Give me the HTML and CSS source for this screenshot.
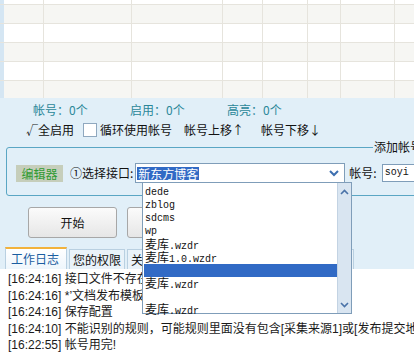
FILE: index.html
```html
<!DOCTYPE html>
<html>
<head>
	<meta charset="utf-8">
	<title>帐号管理</title>
	<link rel="stylesheet" href="styles.css">
</head>
<body>
	<div class="grid">
		<div class="row r0"><span class="c0"></span><span class="c1"></span><span class="c2"></span><span class="c3"></span><span class="c4"></span><span class="c5"></span><span class="c6"></span><span class="c7"></span><span class="c8"></span></div>
		<div class="row odd"><span class="c0"></span><span class="c1"></span><span class="c2"></span><span class="c3"></span><span class="c4"></span><span class="c5"></span><span class="c6"></span><span class="c7"></span><span class="c8"></span></div>
		<div class="row"><span class="c0"></span><span class="c1"></span><span class="c2"></span><span class="c3"></span><span class="c4"></span><span class="c5"></span><span class="c6"></span><span class="c7"></span><span class="c8"></span></div>
		<div class="row odd"><span class="c0"></span><span class="c1"></span><span class="c2"></span><span class="c3"></span><span class="c4"></span><span class="c5"></span><span class="c6"></span><span class="c7"></span><span class="c8"></span></div>
		<div class="row"><span class="c0"></span><span class="c1"></span><span class="c2"></span><span class="c3"></span><span class="c4"></span><span class="c5"></span><span class="c6"></span><span class="c7"></span><span class="c8"></span></div>
		<div class="row odd last"><span class="c0"></span><span class="c1"></span><span class="c2"></span><span class="c3"></span><span class="c4"></span><span class="c5"></span><span class="c6"></span><span class="c7"></span><span class="c8"></span></div>
	</div>

	<div class="stats">
		<span class="stat">帐号：0个</span>
		<span class="stat">启用：0个</span>
		<span class="stat">高亮：0个</span>
	</div>

	<div class="tools">
		<span class="all">√全启用</span>
		<span class="check"></span>
		<span class="loop">循环使用帐号</span>
		<span class="up">帐号上移↑</span>
		<span class="down">帐号下移↓</span>
	</div>

	<fieldset class="group">
		<legend>添加帐号</legend>
		<div class="group-row">
			<span class="tag">编辑器</span>
			<span class="label">①选择接口:</span>
			<div class="combo">
				<span class="picked">新东方博客</span>
				<svg class="arrow" width="10" height="7" viewBox="0 0 10 7"><polyline points="1,1 5,5 9,1" fill="none" stroke="#3d6fb0" stroke-width="2"/></svg>
			</div>
			<span class="label user">帐号:</span>
			<div class="input">soyi</div>
		</div>
	</fieldset>

	<div class="actions">
		<button class="btn">开始</button>
		<button class="btn">停止</button>
		<span class="hint">失败自动切换帐号,发送</span>
	</div>

	<div class="tabs">
		<span class="tab active">工作日志</span>
		<span class="tab">您的权限</span>
		<span class="tab">关于软件</span>
		<span class="tab">发布设置</span>
		<span class="tab">扩展功能</span>
		<span class="tab gray">VIP推广</span>
	</div>

	<div class="log">
		<p>[16:24:16] 接口文件不存在</p>
		<p>[16:24:16] *’文档发布模板不存在</p>
		<p>[16:24:16] 保存配置</p>
		<p>[16:24:10] 不能识别的规则，可能规则里面没有包含[采集来源1]或[发布提交地址]</p>
		<p>[16:22:55] 帐号用完!</p>
	</div>

	<div class="dropdown">
		<ul class="items">
			<li>dede</li>
			<li>zblog</li>
			<li>sdcms</li>
			<li>wp</li>
			<li><span class="cn">麦库</span><span>.wzdr</span></li>
			<li><span class="cn">麦库</span><span>1.0.wzdr</span></li>
			<li class="sel"></li>
			<li><span class="cn">麦库</span><span>.wzdr</span></li>
			<li></li>
			<li><span class="cn">麦库</span><span>.wzdr</span></li>
		</ul>
		<div class="scroll">
			<svg width="9" height="6" viewBox="0 0 9 6"><polyline points="1,5 4.5,1.5 8,5" fill="none" stroke="#4a72a8" stroke-width="1.6"/></svg>
			<svg width="9" height="6" viewBox="0 0 9 6"><polyline points="1,1 4.5,4.5 8,1" fill="none" stroke="#4a72a8" stroke-width="1.6"/></svg>
		</div>
	</div>
</body>
</html>
```
FILE: styles.css
```css
body {
	margin: 0;
	width: 414px;
	height: 353px;
	overflow: hidden;
	position: relative;
	background: #e1eff8;
	font-family: "Noto Sans CJK SC", sans-serif;
	font-size: 12px;
	line-height: 14px;
	color: #111;
}

/* 上面的表格 */
.grid { height: 98px; background: #fff; }
.row { display: flex; height: 18px; border-bottom: 1px solid #e6e4dd; }
.row.r0 { height: 4px; }
.row.odd { background: #f6f6f3; }
.row.last { height: 17px; border-bottom: 0; }
.row span { border-right: 1px solid #e6e4dd; flex: none; }
.row .c0 { width: 4px; border-right: 0; background: #d5e6f3; }
.c1 { width: 39px; }
.c2 { width: 87px; }
.c3 { width: 90px; }
.c4 { width: 39px; }
.c5 { width: 44px; }
.c6 { width: 32px; }
.c7 { width: 53px; }
.row .c8 { flex: 1; border-right: 0; }

.stats { display: flex; height: 23px; align-items: center; padding-left: 33px; padding-top: 1px; box-sizing: border-box; }
.stat { width: 97px; color: #2a8798; }

.tools { display: flex; align-items: center; height: 18px; padding-left: 26px; }
.check { width: 12px; height: 12px; border: 1px solid #8fa8bf; background: #fff; margin-left: 9px; }
.loop { margin-left: 3px; }
.up { margin-left: 12px; }
.down { margin-left: 17px; }

/* 添加帐号 */
.group {
	margin: 0 0 0 6px;
	padding: 8px 0 0 9px;
	width: 460px;
	height: 57px;
	box-sizing: border-box;
	border: 1px solid #5aa6c4;
	border-radius: 3px;
}
.group legend { margin-left: 357px; padding: 0 2px 0 1px; line-height: 16px; }
.group-row { display: flex; align-items: center; height: 20px; }
.tag { background: #c6cebb; color: #2f9a32; width: 47px; height: 17px; line-height: 17px; text-align: center; }
.label { margin-left: 7px; }
.combo {
	width: 207px;
	height: 18px;
	margin-left: 2px;
	border: 1px solid #7f9db9;
	background: #fff;
	display: flex;
	align-items: center;
	padding-left: 1px;
}
.picked { background: #316ac5; color: #fff; padding: 0 1px; line-height: 13px; }
.arrow { margin-left: auto; margin-right: 5px; }
.label.user { margin-left: 4px; }
.input {
	margin-left: 5px;
	height: 16px;
	width: 60px;
	border: 1px solid #7f9db9;
	background: #fff;
	font-family: "Liberation Mono", monospace;
	font-size: 10px;
	line-height: 16px;
	padding-left: 2px;
}

.actions { display: flex; align-items: center; padding: 11px 0 0 28px; height: 31px; }
.btn {
	width: 89px;
	height: 31px;
	border: 1px solid #a7a7a7;
	border-radius: 3px;
	background: linear-gradient(#fbfbfb, #e6e6e6);
	font-family: "Noto Sans CJK SC", sans-serif;
	font-size: 12px;
	color: #111;
	padding: 0;
}
.btn + .btn { margin-left: 10px; }
.hint { margin-left: 4px; }

/* 页签 */
.tabs { display: flex; align-items: flex-end; height: 22px; margin-top: 9px; padding-left: 5px; }
.tab {
	height: 19px;
	line-height: 20px;
	padding: 0 3px;
	margin-right: 2px;
	border: 1px solid #b9d0e1;
	border-bottom: 0;
	background: #e9f2f9;
	white-space: nowrap;
}
.tab.active {
	height: 20px;
	padding: 0 7px 0 5px;
	border-top: 2px solid #f2b23c;
	background: linear-gradient(#ffffff, #eef6fc);
	color: #1b5ea1;
}
.tab.gray { color: #8c8c8c; padding-left: 6px; }

.log { background: #fff; height: 90px; padding: 2px 0 0 8px; }
.log p { margin: 0; height: 16.6px; line-height: 16px; white-space: nowrap; font-family: "Liberation Sans", "Noto Sans CJK SC", sans-serif; color: #1a1a1a; }

/* 下拉列表 */
.dropdown {
	position: absolute;
	left: 142px;
	top: 182px;
	width: 208px;
	height: 130px;
	border: 1px solid #7f9db9;
	background: #fff;
	display: flex;
}
.items { list-style: none; margin: 0; padding: 3px 0 0 1px; flex: 1; }
.items li {
	display: flex;
	align-items: baseline;
	height: 13px;
	line-height: 13px;
	padding-left: 1px;
	font-family: "Liberation Mono", monospace;
	font-size: 10px;
	white-space: nowrap;
}
.items .cn { font-family: "Noto Sans CJK SC", sans-serif; font-size: 12px; line-height: 12px; }
.items li.sel { background: #316ac5; }
.scroll {
	width: 13px;
	background: #d9e5f1;
	border-left: 1px solid #c3d3e3;
	display: flex;
	flex-direction: column;
	justify-content: space-between;
	align-items: center;
	padding: 6px 0 5px;
}
```
